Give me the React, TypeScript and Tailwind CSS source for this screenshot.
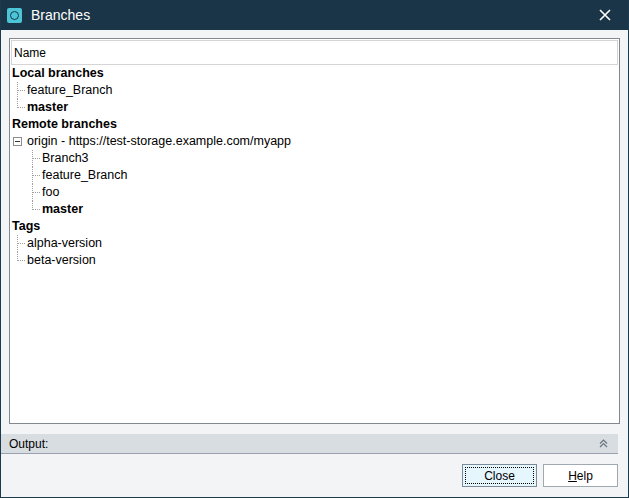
import React from "react";

type Row = { text: string; level: number; bold?: boolean; line?: boolean; last?: boolean; minus?: boolean };

const ROWS: Row[] = [
  { text: "Local branches", level: 0, bold: true },
  { text: "feature_Branch", level: 1, line: true },
  { text: "master", level: 1, bold: true, line: true, last: true },
  { text: "Remote branches", level: 0, bold: true },
  { text: "origin - https://test-storage.example.com/myapp", level: 1, minus: true },
  { text: "Branch3", level: 2, line: true },
  { text: "feature_Branch", level: 2, line: true },
  { text: "foo", level: 2, line: true },
  { text: "master", level: 2, bold: true, line: true, last: true },
  { text: "Tags", level: 0, bold: true },
  { text: "alpha-version", level: 1, line: true },
  { text: "beta-version", level: 1, line: true, last: true },
];

function TreeRow({ r }: { r: Row }) {
  const pad = r.level === 0 ? 2 : r.level === 1 ? 17 : 32;
  return (
    <div className="relative h-[17px] flex items-center" style={{ paddingLeft: pad }}>
      {r.line && (
        <>
          <div
            className="absolute border-l border-dotted border-[#a0a0a0]"
            style={{ left: pad - 10, top: 0, height: r.last ? 9 : 17 }}
          />
          <div className="absolute border-t border-dotted border-[#a0a0a0] w-[7px]" style={{ left: pad - 9, top: 8 }} />
        </>
      )}
      {r.minus && (
        <div className="absolute left-[3px] top-[4px] w-[9px] h-[9px] border border-[#8d8d8d] bg-white flex items-center justify-center">
          <div className="w-[5px] h-px bg-[#333]" />
        </div>
      )}
      <span className={`text-[12.5px] ${r.bold ? "font-bold" : ""}`}>{r.text}</span>
    </div>
  );
}

export default function App() {
  return (
    <div
      className="w-[629px] h-[498px] flex flex-col bg-[#f3f4f6] border border-t-0 border-[#1c3a4e] text-black"
      style={{ fontFamily: "'Liberation Sans', Arial, sans-serif" }}
    >
      <div className="h-[30px] bg-[#1a3547] flex items-center px-[6px] text-white shrink-0">
        <div className="w-[15px] h-[15px] bg-[#4cc6d6] rounded-[2px] flex items-center justify-center">
          <div className="w-[9px] h-[9px] rounded-full border-[1.5px] border-[#1a3547]" />
        </div>
        <span className="ml-[9px] text-[14px]">Branches</span>
        <svg className="ml-auto mr-[11px]" width="12" height="12" viewBox="0 0 12 12">
          <path d="M1 1L11 11M11 1L1 11" stroke="white" strokeWidth="1.6" />
        </svg>
      </div>
      <div className="flex-1 flex flex-col px-[8px] pt-[8px]">
        <div className="h-[386px] bg-white border border-[#828790] flex flex-col">
          <div className="h-[25px] mx-[1px] mt-[1px] border border-[#d5d5d5] bg-white flex items-center px-[2px] text-[12px]">
            Name
          </div>
          <div>
            {ROWS.map((r, i) => (
              <TreeRow key={i} r={r} />
            ))}
          </div>
        </div>
      </div>
      <div className="h-[22px] bg-[#d8dde2] border-b border-[#9aa3ad] mt-[10px] flex items-center px-[8px] text-[12px] mr-[10px]">
        <span>Output:</span>
        <svg className="ml-auto mr-[2px]" width="9" height="9" viewBox="0 0 9 9">
          <path d="M1 4.5L4.5 1L8 4.5M1 8L4.5 4.5L8 8" stroke="#6b7580" strokeWidth="1.2" fill="none" />
        </svg>
      </div>
      <div className="h-[43px] flex items-center justify-end gap-[6px] pr-[10px] shrink-0">
        <button className="w-[75px] h-[23px] border border-[#7a8a99] bg-[#e5f6fd] text-[12px] flex items-center justify-center p-[2px]">
          <span className="w-full h-full border border-dotted border-black flex items-center justify-center">Close</span>
        </button>
        <button className="w-[75px] h-[23px] border border-[#a0a8b0] bg-white text-[12px]">
          <u>H</u>elp
        </button>
      </div>
    </div>
  );
}
